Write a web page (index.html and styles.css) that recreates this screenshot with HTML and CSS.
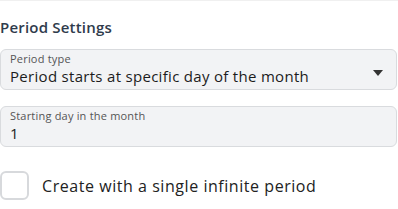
FILE: index.html
```html
<!DOCTYPE html>
<html lang="en">
<head>
    <meta charset="UTF-8">
    <meta name="viewport" content="width=device-width, initial-scale=1.0">
    <title>Period Settings</title>
    <link rel="stylesheet" href="styles.css">
</head>
<body>

    <!-- Period settings section -->
    <div class="section">
        <h2 class="section-title">Period Settings</h2>

        <div class="field">
            <label class="field-label" for="periodType">Period type</label>
            <div class="select-row">
                <span class="field-value" id="periodType">Period starts at specific day of the month</span>
                <span class="caret"></span>
            </div>
        </div>

        <div class="field field-second">
            <label class="field-label" for="startDay">Starting day in the month</label>
            <span class="field-value" id="startDay">1</span>
        </div>

        <label class="check-row">
            <span class="checkbox"></span>
            <span class="check-text">Create with a single infinite period</span>
        </label>
    </div>

</body>
</html>
```

FILE: styles.css
```css
body {
    margin: 0;
    font-family: "Open Sans", Arial, sans-serif;
    background-color: #fff;
    color: #1f1f1f;
}

/* Section wrapper */
.section {
    border-top: 1px solid #f0f0f0;
    padding-right: 1px;
}

.section-title {
    font-size: 15px;
    line-height: 20px;
    font-weight: 600;
    letter-spacing: 0.2px;
    color: #2f3b4c;
    margin: 16px 0 12px;
}

/* Filled input boxes */
.field {
    display: flex;
    flex-direction: column;
    background-color: #f2f3f5;
    border: 1px solid #d9dbde;
    border-radius: 6px;
    padding: 2px 9px 4px;
}

.field-second {
    margin-top: 16px;
}

.field-label {
    font-size: 11px;
    line-height: 13px;
    letter-spacing: 0.2px;
    color: #555;
    margin-bottom: 2px;
}

.field-value {
    font-size: 15px;
    line-height: 18px;
    letter-spacing: 0.3px;
    color: #1c1c1c;
}

.select-row {
    display: flex;
    align-items: center;
    justify-content: space-between;
}

.caret {
    width: 0;
    height: 0;
    border-left: 5.5px solid transparent;
    border-right: 5.5px solid transparent;
    border-top: 6px solid #333;
    margin-right: 4px;
    margin-top: -7px;
}

/* Checkbox row */
.check-row {
    display: flex;
    align-items: center;
    margin-top: 24px;
}

.checkbox {
    width: 25px;
    height: 25px;
    border: 2px solid #d7d9dc;
    border-radius: 6px;
    margin-right: 13px;
}

.check-text {
    font-size: 16px;
    letter-spacing: 0.55px;
    color: #222;
}
```
